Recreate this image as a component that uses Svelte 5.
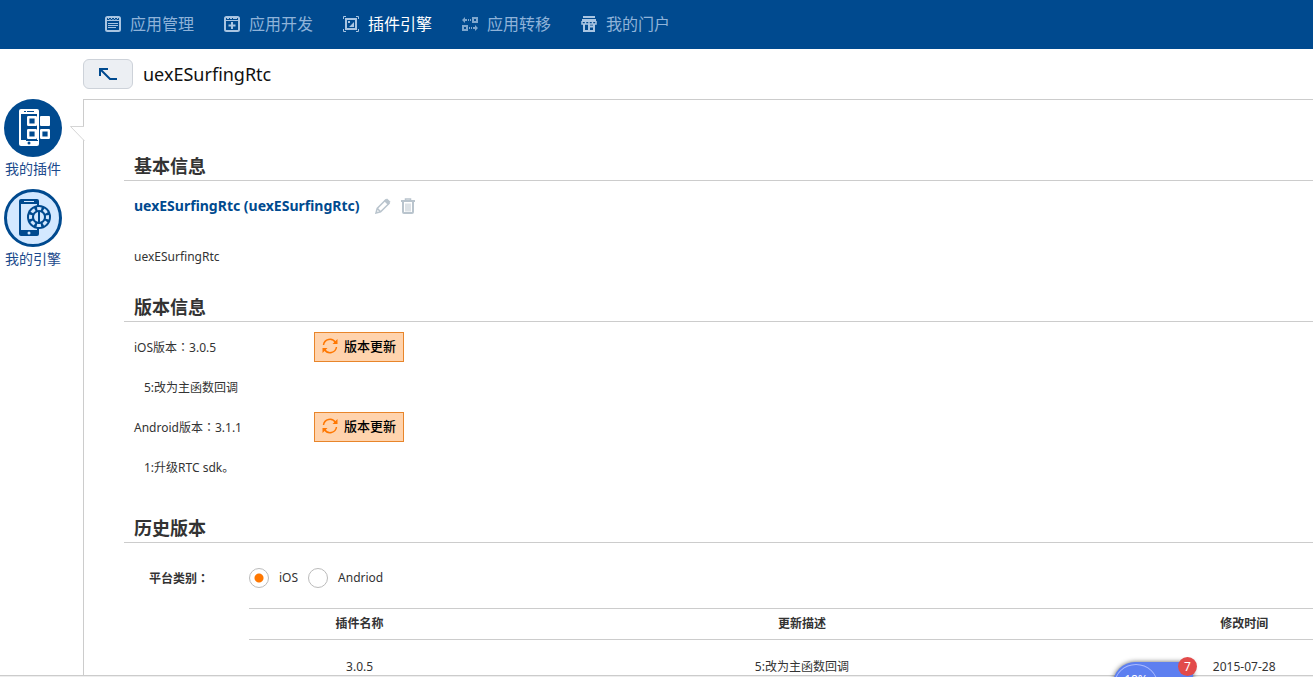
<script>
  let platform = $state('ios');
  const nav = [
    { label: '应用管理', icon: 'manage' },
    { label: '应用开发', icon: 'develop' },
    { label: '插件引擎', icon: 'plugin', active: true },
    { label: '应用转移', icon: 'transfer' },
    { label: '我的门户', icon: 'portal' }
  ];
  const versions = [
    { name: 'iOS', number: '3.0.5', note: '5:改为主函数回调' },
    { name: 'Android', number: '3.1.1', note: '1:升级RTC sdk。' }
  ];
</script>

<div class="page">
  <header>
    <nav>
      {#each nav as item}
        <a href="#{item.icon}" class:active={item.active}>
          <svg width="16" height="16" viewBox="0 0 16 16" fill="none" stroke="currentColor" aria-hidden="true">
            {#if item.icon === 'manage'}
              <rect x="1" y="1" width="14" height="14" rx="1.5" stroke-width="2" />
              <path d="M2 4.500H14M3 7.500H13M3 9.500H13M3 11.500H11" />
              <path d="M3 2.500h1M6 2.500h1M9 2.500h1M12 2.500h1M4.500 3.500h1M7.500 3.500h1M10.500 3.500h1" />
            {:else if item.icon === 'develop'}
              <rect x="1" y="1" width="14" height="14" rx="1.5" stroke-width="2" />
              <path d="M2 4.500H14M3 2.500h2M6 2.500h2M9 2.500h4" />
              <path d="M8 6v7M4.500 9.500h7" stroke-width="2" />
            {:else if item.icon === 'plugin'}
              <rect x="3" y="3" width="10" height="10" stroke-width="2" />
              <path d="M.5 3V.5H3M13 .5h2.500V3M.5 13v2.500H3M13 15.500h2.500V13" />
              <path d="M6 11l5-5v5zM5 5h2v2H5z" fill="currentColor" stroke="none" />
            {:else if item.icon === 'transfer'}
              <g opacity="0.75">
                <path d="M0 4l3-3v2h2v2H3v2zM16 12l-3-3v2h-2v2h2v2z" fill="currentColor" stroke="none" />
                <path d="M6 4h1M8 4h1M7 12h1M9 12h1" stroke-width="2" />
                <path d="M11 2h4v4h-4zM1 10h4v4H1z" stroke-width="2" />
              </g>
            {:else}
              <path d="M2 1h12" stroke-width="2" />
              <path d="M1 4.500h14" stroke-width="3" />
              <path d="M1 5v3h3.500V5M4.500 8H8V5M8 8h3.500V5M11.500 8H15V5" stroke-width="1.500" />
              <path d="M3 8v7h5M8 10.500h5V15H8zM13 8v3M8 8v7" stroke-width="2" />
            {/if}
          </svg>
          <span>{item.label}</span>
        </a>
      {/each}
    </nav>
  </header>

  <div class="shell">
    <aside>
      <a href="#plugins">
        <svg width="58" height="58" viewBox="0 0 58 58" aria-hidden="true">
          <circle cx="29" cy="29" r="29" fill="#004a8f" />
          <rect x="15" y="10" width="20" height="37" rx="2" fill="#fff" />
          <path d="M17 15h16v26H17z" fill="#004a8f" />
          <path d="M20 12.500h2M23 12.500h7" stroke="#004a8f" />
          <circle cx="25" cy="44" r="1.500" fill="#004a8f" />
          <rect x="36" y="17" width="10" height="10" rx="1" fill="#fff" />
          <path d="M22 16h12v26H22zM35 29h12v12H35z" fill="#004a8f" />
          <g fill="#004a8f" stroke="#fff" stroke-width="2.400" stroke-linejoin="round">
            <rect x="24.200" y="18.200" width="7.600" height="7.600" />
            <rect x="24.200" y="31.200" width="7.600" height="7.600" />
            <rect x="37.200" y="31.200" width="7.600" height="7.600" />
          </g>
          <path d="M33 15h2v26h-2z" fill="#fff" />
        </svg>
        <span>我的插件</span>
      </a>
      <a href="#engines">
        <svg width="58" height="58" viewBox="0 0 58 58" aria-hidden="true">
          <circle cx="29" cy="29" r="27.500" fill="#d3e8ff" stroke="#004a8f" stroke-width="3" />
          <rect x="15" y="10" width="20" height="37" rx="2" fill="#004a8f" />
          <path d="M17 15h16v26H17z" fill="#d3e8ff" />
          <path d="M20 12.500h10" stroke="#d3e8ff" />
          <circle cx="25" cy="44" r="1.500" fill="#d3e8ff" />
          <circle cx="35" cy="28" r="12" fill="#004a8f" />
          <circle cx="35" cy="28" r="8.500" fill="none" stroke="#d3e8ff" stroke-width="3" stroke-dasharray="4.200 2.476" stroke-dashoffset="2.100" />
          <circle cx="35" cy="28" r="5" fill="#d3e8ff" />
          <path d="M35 22v12" stroke="#004a8f" stroke-width="2" />
        </svg>
        <span>我的引擎</span>
      </a>
    </aside>

    <main>
      <div class="title">
        <button class="back" aria-label="返回">
          <svg width="20" height="14" viewBox="0 0 20 14" fill="none" stroke="#004a8f" stroke-width="2" aria-hidden="true">
            <path d="M2 9V2h8M2 2l10 10h7" />
          </svg>
        </button>
        <h1>uexESurfingRtc</h1>
      </div>

      <div class="panel">
        <svg class="pointer" width="15" height="17" viewBox="0 0 15 17" aria-hidden="true">
          <path d="M1 .5H15V15.500z" fill="#fff" />
          <path d="M14 .5H.5L14.500 15" fill="none" stroke="#d5d5d5" />
        </svg>

        <section class="basic">
          <h2>基本信息</h2>
          <div class="name">
            <strong>uexESurfingRtc (uexESurfingRtc)</strong>
            <button aria-label="编辑">
              <svg width="16" height="16" viewBox="0 0 16 16" fill="none" stroke="#b9c4cd" stroke-width="1.500" aria-hidden="true">
                <path d="M1 15l1.200-4.600L10.500 2l3.500 3.500-8.400 8.300zM2.200 10.400l3.400 3.400" />
                <path d="M9 3L12 .5l3.500 3.300L13 7z" fill="#b9c4cd" stroke="none" />
              </svg>
            </button>
            <button aria-label="删除">
              <svg width="14" height="16" viewBox="0 0 14 16" fill="none" stroke="#b9c4cd" aria-hidden="true">
                <path d="M0 3h14M2 4v10q0 1 1 1h8q1 0 1-1V4" stroke-width="2" />
                <path d="M4.500 2.500V1h5v1.500" stroke-width="1.500" />
                <path d="M5 5.500v8M7 5.500v8M9 5.500v8" />
              </svg>
            </button>
          </div>
          <p>uexESurfingRtc</p>
        </section>

        <section class="versions">
          <h2>版本信息</h2>
          {#each versions as version}
            <div class="version">
              <span class="number">{version.name}版本<span class="colon">：</span>{version.number}</span>
              <button class="update">
                <svg width="16" height="16" viewBox="0 0 16 16" fill="none" stroke="#ff7700" stroke-width="1.500" aria-hidden="true">
                  <path d="M1.500 7A6.500 6.500 0 0 1 13.500 4.500M14.500 9A6.500 6.500 0 0 1 2.500 11.500" />
                  <path d="M15.500 1v5h-5zM.5 15v-5h5z" fill="#ff7700" stroke="none" />
                </svg>
                版本更新
              </button>
            </div>
            <p>{version.note}</p>
          {/each}
        </section>

        <section class="history">
          <h2>历史版本</h2>
          <div class="filter" role="radiogroup" aria-labelledby="platform-label">
            <span class="caption" id="platform-label">平台类别<span class="colon">：</span></span>
            <label><input type="radio" name="platform" value="ios" bind:group={platform} />iOS</label>
            <label><input type="radio" name="platform" value="android" bind:group={platform} />Andriod</label>
          </div>
          <table>
            <thead>
              <tr><th>插件名称</th><th class="wide">更新描述</th><th>修改时间</th></tr>
            </thead>
            <tbody>
              <tr><td>3.0.5</td><td>5:改为主函数回调</td><td>2015-07-28</td></tr>
            </tbody>
          </table>
        </section>
      </div>
    </main>
  </div>

  <div class="edge"></div>
  <div class="monitor">
    <span class="ring">18%</span>
    <span class="badge">7</span>
  </div>
</div>

<style>
  :global(body) {
    background: #fff;
    overflow: hidden;
  }
  .page {
    position: relative;
    height: 100vh;
    overflow: hidden;
    display: flex;
    flex-direction: column;
    color: #333;
    font: 12px/20px "Noto Sans", "Noto Sans CJK SC", sans-serif;
  }
  header {
    flex: none;
    background: #004a8f;
  }
  nav {
    display: flex;
    gap: 30px;
    height: 48px;
    padding: 0 0 1px 105px;
  }
  nav a {
    display: flex;
    align-items: center;
    gap: 9px;
    color: #8fb3d9;
    font-size: 16px;
    text-decoration: none;
    white-space: nowrap;
  }
  nav a.active {
    color: #fff;
  }
  nav svg {
    color: #a9c5e2;
  }
  .shell {
    flex: 1;
    min-height: 0;
    display: flex;
  }
  aside {
    flex: none;
    width: 83px;
    padding-top: 50px;
  }
  aside a {
    display: flex;
    flex-direction: column;
    align-items: center;
    width: 66px;
    height: 90px;
    color: #1c4a8c;
    font-size: 14px;
    line-height: 24px;
    text-decoration: none;
  }
  main {
    flex: 1;
    min-width: 0;
    display: flex;
    flex-direction: column;
  }
  .title {
    flex: none;
    display: flex;
    align-items: center;
    gap: 10px;
    height: 50px;
  }
  button {
    border: 0;
    padding: 0;
    background: none;
    font: inherit;
    cursor: pointer;
  }
  button svg {
    display: block;
  }
  .back {
    display: flex;
    align-items: center;
    justify-content: center;
    width: 50px;
    height: 30px;
    border: 1px solid #cdd2d9;
    border-radius: 6px;
    background: #eceff3;
  }
  h1 {
    margin: 0;
    color: #111;
    font-size: 18px;
    font-weight: 400;
  }
  .panel {
    flex: 1;
    position: relative;
    border: solid #ccc;
    border-width: 1px 0 0 1px;
    padding: 50px 0 0 40px;
  }
  .pointer {
    position: absolute;
    left: -14px;
    top: 26px;
  }
  h2 {
    margin: 0;
    height: 30px;
    padding-left: 10px;
    border-bottom: 1px solid #ccc;
    font-size: 18px;
    line-height: 32px;
  }
  p {
    margin: 0;
  }
  .colon {
    font-family: "Noto Sans CJK TC", sans-serif;
  }
  .basic {
    height: 141px;
  }
  .name {
    display: flex;
    align-items: center;
    gap: 10px;
    height: 50px;
    padding-left: 10px;
  }
  .name strong {
    margin-right: 5px;
    color: #004a8f;
    font-size: 14px;
  }
  .basic p {
    padding: 16px 10px 0;
  }
  .versions {
    height: 221px;
  }
  .version {
    display: flex;
    align-items: center;
    height: 50px;
    padding-left: 10px;
  }
  .number {
    width: 180px;
    line-height: 22px;
  }
  .versions p {
    height: 30px;
    padding-left: 20px;
    line-height: 32px;
  }
  .update {
    display: flex;
    align-items: center;
    justify-content: center;
    gap: 6px;
    width: 90px;
    height: 30px;
    padding-bottom: 2px;
    border: 1px solid #e8852a;
    background: #ffd3ad;
    color: #000;
    font-size: 13px;
    font-weight: 500;
  }
  .filter {
    display: flex;
    align-items: center;
    gap: 10px;
    height: 60px;
    padding: 5px 0 0 25px;
  }
  .caption {
    width: 90px;
    font-weight: 700;
  }
  label {
    display: flex;
    align-items: center;
    gap: 10px;
  }
  input {
    appearance: none;
    width: 20px;
    height: 20px;
    margin: 0;
    border: 1px solid #bbb;
    border-radius: 50%;
    background: #fff;
  }
  input:checked {
    background: radial-gradient(circle, #ff7700 4px, #fff 5px);
  }
  table {
    width: 93%;
    min-width: 1105px;
    margin-left: 125px;
    border-collapse: collapse;
    table-layout: fixed;
    text-align: center;
  }
  th {
    height: 30px;
    padding: 0;
    border: solid #ccc;
    border-width: 1px 0;
  }
  th.wide {
    width: 60%;
  }
  td {
    height: 53px;
    padding: 0;
  }
  .edge {
    position: absolute;
    inset: auto 0 0;
    height: 1px;
    border-top: 1px solid #ccc;
    background: #eee;
  }
  .monitor {
    position: absolute;
    right: 120px;
    bottom: -29px;
    width: 80px;
    height: 44px;
    border-radius: 24px 0 0 24px;
    background: #5d7ff0;
    box-shadow: 0 0 5px #666;
    color: #fff;
  }
  .ring {
    position: absolute;
    left: 1px;
    top: 2px;
    width: 42px;
    height: 40px;
    border: 1px solid #aabaff;
    border-radius: 50%;
    font-size: 12px;
    line-height: 30px;
    text-align: center;
  }
  .badge {
    position: absolute;
    right: -4px;
    top: -5px;
    width: 19px;
    height: 19px;
    border-radius: 50%;
    background: #e24a4a;
    line-height: 19px;
    text-align: center;
  }
</style>
